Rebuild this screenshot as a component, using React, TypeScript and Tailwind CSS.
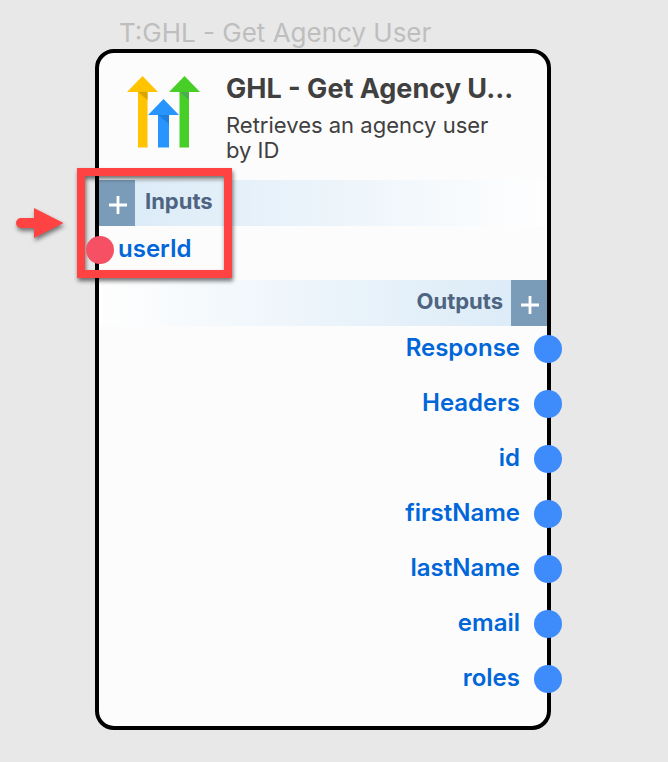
import React from "react";

const outputs = ["Response", "Headers", "id", "firstName", "lastName", "email", "roles"];

function Logo() {
  return (
    <svg viewBox="0 0 74 72" className="h-[72px] w-[74px] shrink-0" aria-hidden="true">
      <path d="M11 16h9.500v55.500H11z" fill="#ffc300" />
      <path d="M11 16h9.500v8z" fill="#d9a300" />
      <path d="M0 16 15.500 0 31 16z" fill="#ffc300" />
      <path d="M52.500 16H62v55.500h-9.500z" fill="#48cf27" />
      <path d="M52.500 16H62v8z" fill="#4bae4c" />
      <path d="M42 16 57.500 0 73 16z" fill="#48cf27" />
      <path d="M31 39h11v32.500H31z" fill="#2895ff" />
      <path d="M31 39h11v9z" fill="#1f7fdf" />
      <path d="M21 39 36.500 23 52 39z" fill="#2895ff" />
    </svg>
  );
}

function PlusButton({ label }: { label: string }) {
  return (
    <button
      type="button"
      aria-label={label}
      className="flex w-9 shrink-0 items-center justify-center bg-[#7a9cb8] pt-[3px] pl-0.5 text-white"
    >
      <svg viewBox="0 0 18 18" className="size-[18px]" fill="none" stroke="currentColor" strokeWidth="2.800">
        <path d="M9 0v18M0 9h18" />
      </svg>
    </button>
  );
}

export default function App() {
  return (
    <main className="min-h-screen bg-[#e8e8e8] px-[95px] pt-[17px] pb-8 font-['Inter',sans-serif]">
      <div className="max-w-[456px]">
        <p className="truncate pl-6 text-[26px] leading-8 text-[#bebebe]">T:GHL - Get Agency User</p>
        <article className="rounded-[19px] border-4 border-black bg-[#fcfcfc]">
          <header className="flex gap-[25px] pt-[19px] pr-[30px] pb-[17px] pl-7">
            <div className="pt-1">
              <Logo />
            </div>
            <div className="min-w-0 flex-1 text-[#404040]">
              <h1 className="text-[27px] leading-[34px] font-bold whitespace-nowrap">GHL - Get Agency U...</h1>
              <p className="pt-[7px] text-[22px] leading-[25px]">Retrieves an agency user by ID</p>
            </div>
          </header>

          <section className="relative">
            <div className="flex h-[46px] bg-linear-to-r from-[#d9eaf7] to-[#fefefe]">
              <PlusButton label="Add input" />
              <h2 className="self-center pb-1 pl-2.5 text-[22px] leading-7 font-bold text-[#4e6480]">Inputs</h2>
            </div>
            <div className="pt-2.5 pb-4">
              <div className="-ml-[13px] flex h-7 items-center gap-1">
                <span className="z-10 size-7 rounded-full bg-[#f55064]" />
                <span className="pb-[3px] text-[24px] leading-7 font-semibold text-[#0066d9]">userId</span>
              </div>
            </div>
            <div className="pointer-events-none absolute -top-3 -left-[22px] h-[110px] w-[155px] border-8 border-[#ff4242] drop-shadow-[1px_3px_2px_rgba(0,0,0,0.55)]" />
            <svg
              viewBox="0 0 48 30"
              className="pointer-events-none absolute top-7 -left-[83px] h-[30px] w-12 drop-shadow-[1px_3px_2px_rgba(0,0,0,0.5)]"
              fill="#ff4242"
              aria-hidden="true"
            >
              <path d="M5 10h13V0l29.500 15L18 30V20H5A5 5 0 0 1 5 10z" />
            </svg>
          </section>

          <section>
            <div className="flex h-[46px] justify-end bg-linear-to-l from-[#d9eaf7] to-[#fefefe]">
              <h2 className="self-center pr-2 pb-1 text-[22px] leading-7 font-bold text-[#4e6480]">Outputs</h2>
              <PlusButton label="Add output" />
            </div>
            <ul className="flex flex-col gap-[27px] pt-[9px] pb-[33px]">
              {outputs.map((name) => (
                <li key={name} className="-mr-[15px] flex h-7 items-center justify-end gap-3.5">
                  <span className="pb-[3px] text-[24px] leading-7 font-semibold text-[#0066d9]">{name}</span>
                  <span className="size-7 rounded-full bg-[#3e8bfb]" />
                </li>
              ))}
            </ul>
          </section>
        </article>
      </div>
    </main>
  );
}
